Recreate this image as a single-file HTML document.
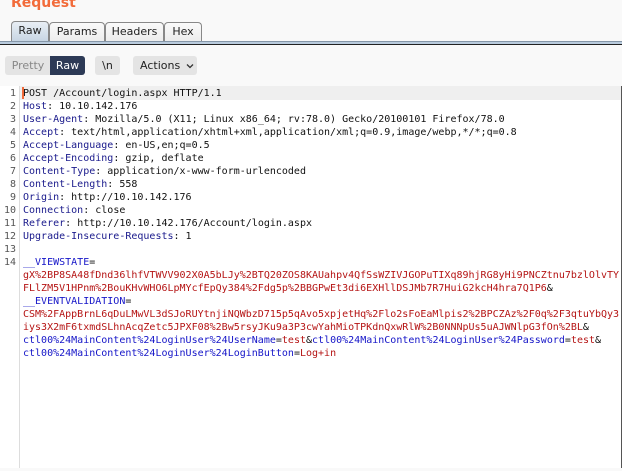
<!DOCTYPE html>
<html><head><meta charset="utf-8"><style>
*{margin:0;padding:0;box-sizing:border-box}
body{width:622px;height:471px;overflow:hidden;background:#f9f9f9;font-family:"DejaVu Sans","Liberation Sans",sans-serif;position:relative}
.title{position:absolute;left:11px;top:-5px;font-size:14px;font-weight:bold;color:#f26b3a;font-family:"DejaVu Sans",sans-serif}
.tab{position:absolute;top:22px;height:20px;border:1px solid #888;border-bottom:none;border-radius:4px 4px 0 0;font-size:11px;line-height:18px;text-align:center;color:#222;background:linear-gradient(#fafafa,#ececec)}
.tab.act{background:linear-gradient(#e8eef4,#c6d4e2);top:21px;height:21px}
.bar1{position:absolute;left:0;top:41px;width:622px;height:3px;background:#b9cbdd;border-top:1px solid #8596a8}
.bar2{position:absolute;left:0;top:44px;width:622px;height:1px;background:#222}
.btn{position:absolute;top:56px;height:19px;font-size:11px;line-height:19px;text-align:center;background:#e4e4e4;color:#222;border-radius:3px}
.ed{position:absolute;left:0;top:86px;width:621px;height:382px;background:#fff}
.hl{position:absolute;left:20px;top:86px;width:601px;height:14px;background:#efefef}
.rb{position:absolute;left:621px;top:86px;width:1px;height:382px;background:#555}
.gut{position:absolute;left:0;top:86px;width:20px;height:382px;border-right:1px solid #ddd;background:#fff}
.num{position:absolute;left:0;width:16px;text-align:right;font:10px/13px "DejaVu Sans Mono",monospace;color:#555}
.code{position:absolute;left:23px;top:87px;font:10px/13px "DejaVu Sans Mono",monospace;color:#111;white-space:pre}
.k{color:#1a1a8c}.b{color:#1515c8}.r{color:#b51414}
.caret{position:absolute;left:22px;top:87px;width:2px;height:12px;background:#f26b3a}
</style></head><body>
<div class="title">Request</div>
<div class="tab act" style="left:11px;width:38px">Raw</div>
<div class="tab" style="left:49px;width:56px">Params</div>
<div class="tab" style="left:105px;width:59px">Headers</div>
<div class="tab" style="left:164px;width:38px">Hex</div>
<div class="bar1"></div><div class="bar2"></div>
<div class="btn" style="left:5px;width:46px;color:#888;border-radius:3px 0 0 3px">Pretty</div>
<div class="btn" style="left:50px;width:35px;background:#2d3a56;color:#fff;border-radius:0 3px 3px 0">Raw</div>
<div class="btn" style="left:95px;width:25px">\n</div>
<div class="btn" style="left:133px;width:64px;text-align:left;padding-left:7px">Actions <svg width="8" height="6" viewBox="0 0 8 6" style="margin-left:2px"><path d="M1 1.5L4 4.5L7 1.5" fill="none" stroke="#333" stroke-width="1.3"/></svg></div>
<div class="ed"></div><div class="hl"></div><div class="rb"></div>
<div class="gut"></div>
<div class="num" style="top:87px">1<br>2<br>3<br>4<br>5<br>6<br>7<br>8<br>9<br>10<br>11<br>12<br>13<br>14</div>
<div class="caret"></div>
<div class="code">POST /Account/login.aspx HTTP/1.1
<span class="k">Host</span>: 10.10.142.176
<span class="k">User-Agent</span>: Mozilla/5.0 (X11; Linux x86_64; rv:78.0) Gecko/20100101 Firefox/78.0
<span class="k">Accept</span>: text/html,application/xhtml+xml,application/xml;q=0.9,image/webp,*/*;q=0.8
<span class="k">Accept-Language</span>: en-US,en;q=0.5
<span class="k">Accept-Encoding</span>: gzip, deflate
<span class="k">Content-Type</span>: application/x-www-form-urlencoded
<span class="k">Content-Length</span>: 558
<span class="k">Origin</span>: http://10.10.142.176
<span class="k">Connection</span>: close
<span class="k">Referer</span>: http://10.10.142.176/Account/login.aspx
<span class="k">Upgrade-Insecure-Requests</span>: 1

<span class="b">__VIEWSTATE</span>=
<span class="r">gX%2BP8SA48fDnd36lhfVTWVV902X0A5bLJy%2BTQ20ZOS8KAUahpv4QfSsWZIVJGOPuTIXq89hjRG8yHi9PNCZtnu7bzlOlvTY</span>
<span class="r">FLlZM5V1HPnm%2BouKHvWHO6LpMYcfEpQy384%2Fdg5p%2BBGPwEt3di6EXHllDSJMb7R7HuiG2kcH4hra7Q1P6</span>&amp;
<span class="b">__EVENTVALIDATION</span>=
<span class="r">CSM%2FAppBrnL6qDuLMwVL3dSJoRUYtnjiNQWbzD715p5qAvo5xpjetHq%2Flo2sFoEaMlpis2%2BPCZAz%2F0q%2F3qtuYbQy3</span>
<span class="r">iys3X2mF6txmdSLhnAcqZetc5JPXF08%2Bw5rsyJKu9a3P3cwYahMioTPKdnQxwRlW%2B0NNNpUs5uAJWNlpG3fOn%2BL</span>&amp;
<span class="b">ctl00%24MainContent%24LoginUser%24UserName</span>=<span class="r">test</span>&amp;<span class="b">ctl00%24MainContent%24LoginUser%24Password</span>=<span class="r">test</span>&amp;
<span class="b">ctl00%24MainContent%24LoginUser%24LoginButton</span>=<span class="r">Log+in</span></div>
</body></html>
